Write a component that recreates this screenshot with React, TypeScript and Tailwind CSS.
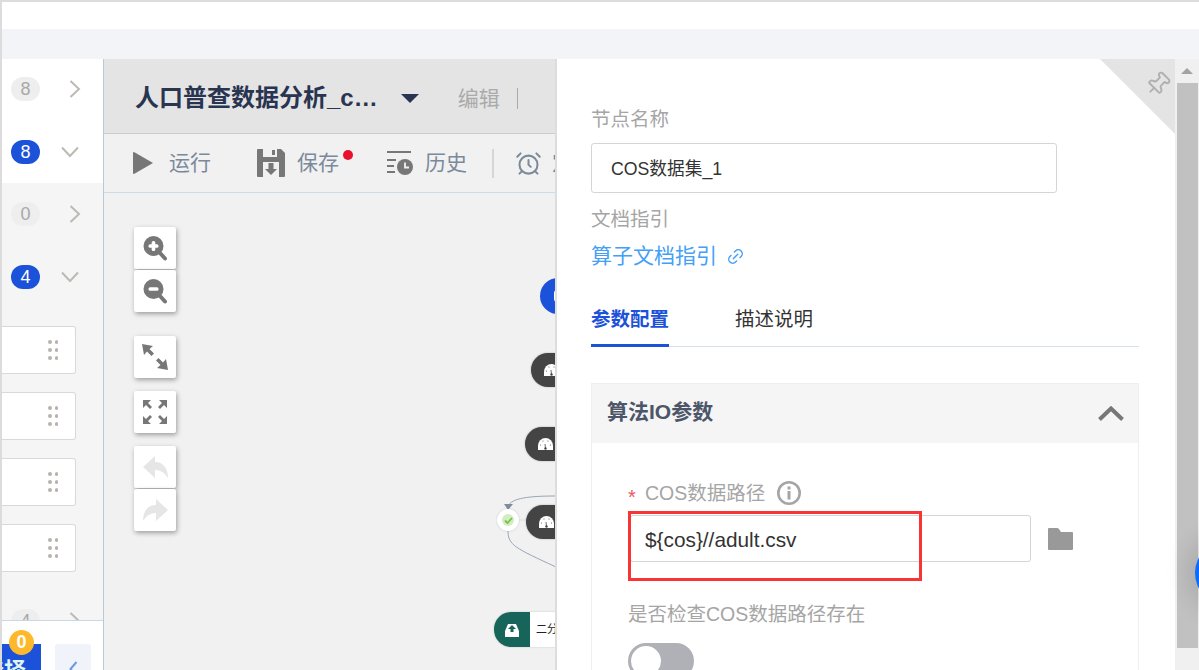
import React from 'react'
import { AlarmClock, Link2, Pin } from 'lucide-react'

const FONT = "font-['Liberation_Sans','Noto_Sans_CJK_SC',sans-serif]"

function ChevronRight() {
    return (
        <svg width="12" height="18" viewBox="0 0 12 18" fill="none" stroke="#bdbab6" strokeWidth="2">
            <polyline points="1.5,1 10,9 1.5,17" />
        </svg>
    )
}

function ChevronDown() {
    return (
        <svg width="18" height="12" viewBox="0 0 18 12" fill="none" stroke="#bdbab6" strokeWidth="2">
            <polyline points="1,1.5 9,10 17,1.5" />
        </svg>
    )
}

function SideRow({ count, open, className }: { count: number; open?: boolean; className: string }) {
    return (
        <div className={`flex items-center shrink-0 ${className}`}>
            <span className={`ml-[9px] w-[29px] h-[24px] rounded-full flex items-center justify-center text-[18px] ${open ? 'bg-[#1c52d9] text-white' : 'bg-[#eeeeee] text-[#a8a8a8]'}`}>
                {count}
            </span>
            {open ? <div className="ml-[21px]"><ChevronDown /></div> : <div className="ml-[29px]"><ChevronRight /></div>}
        </div>
    )
}

function SideCard() {
    return (
        <div className="w-[74px] h-[48px] shrink-0 bg-white border border-l-0 border-[#d9d9d9] rounded-r-[3px] flex items-center justify-end pr-[17px]">
            <div className="grid grid-cols-2 gap-x-[3px] gap-y-[4.5px]">
                {[0, 1, 2, 3, 4, 5].map(i => (
                    <span key={i} className="w-[3.5px] h-[3.5px] rounded-full bg-[#b8b3ad]" />
                ))}
            </div>
        </div>
    )
}

function Sidebar() {
    return (
        <aside className="w-[102px] shrink-0 flex flex-col border-r border-[#bcc8d4] bg-[#f5f5f6]">
            <div className="flex-1 overflow-hidden flex flex-col">
                <div className="bg-white shrink-0">
                    <SideRow count={8} className="h-[60px]" />
                    <SideRow count={8} open className="h-[64px] pt-[2px]" />
                </div>
                <SideRow count={0} className="h-[62px]" />
                <SideRow count={4} open className="h-[64px]" />
                <div className="mt-[17px] flex flex-col gap-[18px]">
                    <SideCard />
                    <SideCard />
                    <SideCard />
                    <SideCard />
                </div>
                <SideRow count={4} className="h-[62px] mt-[18px]" />
            </div>
            <div className="h-[50px] shrink-0 bg-white border-t border-[#c9d8e8] pt-[23px] flex relative">
                <div className="w-[39px] h-[40px] bg-[#1c52d9] overflow-hidden flex justify-end pt-[15px] pr-[15px]">
                    <span className="text-[#dff5ee] text-[22px] leading-[24px] font-bold whitespace-nowrap">选择</span>
                </div>
                <span className="absolute left-[7px] top-[9px] w-[25px] h-[25px] rounded-full bg-[#fdb92b] text-white font-bold text-[18px] flex items-center justify-center">0</span>
                <div className="ml-[14px] w-[36px] h-[40px] bg-[#f0f4fa] rounded-[3px] flex justify-center pt-[17px]">
                    <svg width="9" height="16" viewBox="0 0 9 16" fill="none" stroke="#6a9ae0" strokeWidth="2">
                        <polyline points="7.5,1 1.5,8 7.5,15" />
                    </svg>
                </div>
            </div>
        </aside>
    )
}

function ZoomIcon({ plus }: { plus?: boolean }) {
    return (
        <svg width="24" height="26" viewBox="0 0 24 26">
            <circle cx="10.5" cy="11" r="10" fill="#777777" />
            <line x1="17" y1="18" x2="22" y2="23.5" stroke="#777777" strokeWidth="4" strokeLinecap="round" />
            <rect x="5.5" y="9.2" width="10" height="3.6" rx="1.6" fill="#ffffff" />
            {plus && <rect x="8.7" y="6" width="3.6" height="10" rx="1.6" fill="#ffffff" />}
        </svg>
    )
}

function ExpandIcon() {
    return (
        <svg width="26" height="26" viewBox="0 0 26 26" fill="#777777">
            <polygon points="0,0 11,2 7.5,5 12,9.5 9.5,12 5,7.5 2,11" />
            <polygon points="26,26 15,24 18.5,21 14,16.5 16.5,14 21,18.5 24,15" />
        </svg>
    )
}

function FitIcon() {
    return (
        <svg width="24" height="24" viewBox="0 0 24 24" fill="#777777">
            <polygon points="0,0 8,0 5,3 9,7 7,9 3,5 0,8" />
            <polygon points="24,0 24,8 21,5 17,9 15,7 19,3 16,0" />
            <polygon points="0,24 0,16 3,19 7,15 9,17 5,21 8,24" />
            <polygon points="24,24 16,24 19,21 15,17 17,15 21,19 24,16" />
        </svg>
    )
}

function ReplyIcon({ flip }: { flip?: boolean }) {
    return (
        <svg className={flip ? '-scale-x-100' : ''} width="25" height="23" viewBox="0 0 25 23">
            <path d="M0 11 L12 0 L12 6 C20 6 25 12 25 22 C21 16 17 14 12 14 L12 22 Z" fill="#e6e6e6" />
        </svg>
    )
}

function ToolButton({ children, className }: { children: React.ReactNode; className?: string }) {
    return (
        <div className={`w-[42px] h-[42px] bg-white rounded-[2px] shadow-[1px_2px_5px_rgba(0,0,0,0.35)] flex items-center justify-center ${className ?? ''}`}>
            {children}
        </div>
    )
}

function Gauge() {
    return (
        <svg className="shrink-0" width="15" height="12" viewBox="0 0 15 12">
            <path d="M0 12 L0 8 A7.5 8 0 0 1 15 8 L15 12 Z" fill="#ffffff" />
            <circle cx="7.5" cy="10.5" r="1.2" fill="#444444" />
            <line x1="7.5" y1="10.5" x2="7" y2="6" stroke="#444444" strokeWidth="0.8" />
            <circle cx="2.5" cy="7" r="0.5" fill="#444444" />
            <circle cx="5" cy="3" r="0.5" fill="#444444" />
            <circle cx="10" cy="3" r="0.5" fill="#444444" />
            <circle cx="12.5" cy="7" r="0.5" fill="#444444" />
        </svg>
    )
}

function DarkNode({ x, y }: { x: number; y: number }) {
    return (
        <div className="absolute w-[80px] h-[34px] rounded-l-[17px] bg-[#444444] flex items-center pl-[13px] shadow-[0_0_2px_rgba(0,0,0,0.3)]" style={{ left: x, top: y }}>
            <Gauge />
        </div>
    )
}

function Canvas() {
    return (
        <div className="relative flex-1 overflow-hidden bg-[#f1f1f1] pl-[30px] pt-[34px]">
            <svg className="absolute left-0 top-0" width="451" height="477" fill="none" stroke="#9aa5b8" strokeWidth="1">
                <path d="M452 303 C425 303 408 305 404 313" />
                <polygon points="400,311 409,311 404,317" fill="#7f8ba0" stroke="none" />
                <path d="M404 338 C404 352 411 355 452 374" />
                <line x1="414" y1="327" x2="424" y2="327" stroke="#dddddd" />
            </svg>

            <ToolButton><ZoomIcon plus /></ToolButton>
            <ToolButton className="mt-px"><ZoomIcon /></ToolButton>
            <ToolButton className="mt-[24px]"><ExpandIcon /></ToolButton>
            <ToolButton className="mt-[13px]"><FitIcon /></ToolButton>
            <ToolButton className="mt-[13px]"><ReplyIcon /></ToolButton>
            <ToolButton className="mt-px"><ReplyIcon flip /></ToolButton>

            <div className="absolute left-[436px] top-[85px] w-[36px] h-[36px] rounded-full bg-[#1c52d9] flex items-center pl-[14px]">
                <span className="w-[6px] h-[12px] bg-white rounded-l-[3px]" />
            </div>
            <DarkNode x={427} y={160} />
            <DarkNode x={421} y={234} />
            <DarkNode x={422} y={312} />
            <div className="absolute left-[393px] top-[316px] w-[22px] h-[22px] rounded-full bg-white shadow-[0_0_2px_rgba(0,0,0,0.2)] flex items-center justify-center">
                <div className="w-[12px] h-[12px] rounded-full bg-[#d3ecc4] flex items-center justify-center">
                    <svg width="9" height="7" viewBox="0 0 9 7" fill="none" stroke="#76c442" strokeWidth="1.8">
                        <polyline points="1,3.5 3.5,6 8,1" />
                    </svg>
                </div>
            </div>
            <div className="absolute left-[390px] top-[419px] h-[35px] w-[90px] flex rounded-l-[17px] overflow-hidden bg-white shadow-[0_0_2px_rgba(0,0,0,0.2)]">
                <div className="w-[36px] bg-[#17655a] flex items-center justify-center">
                    <svg width="14" height="14" viewBox="0 0 14 14">
                        <path d="M3 1 L11 1 L14 8 L14 14 L0 14 L0 8 Z" fill="#ffffff" />
                        <path d="M7 2 L11 6 L8.5 6 L8.5 9 L5.5 9 L5.5 6 L3 6 Z" fill="#17655a" />
                    </svg>
                </div>
                <span className="pl-[6px] text-[11px] leading-[35px] text-[#222222]">二分类</span>
            </div>
        </div>
    )
}

function Workspace() {
    return (
        <main className="w-[451px] shrink-0 flex flex-col overflow-hidden">
            <div className="h-[75px] shrink-0 bg-[#e4e4e4] border-b border-[#cccccc] flex items-center pl-[31px] pt-[5px]">
                <h1 className="-mt-[1px] text-[24px] font-bold text-[#283450] whitespace-nowrap">人口普查数据分析_c…</h1>
                <svg className="ml-[23px] shrink-0" width="18" height="9" viewBox="0 0 18 9"><polygon points="0,0 18,0 9,9" fill="#283450" /></svg>
                <span className="ml-[39px] text-[21px] text-[#aaaaaa] whitespace-nowrap">编辑</span>
                <span className="ml-[17px] w-px h-[21px] bg-[#aaaaaa] shrink-0" />
            </div>
            <div className="h-[59px] shrink-0 bg-[#f1f1f1] border-b border-[#cddbe8] flex items-center pl-[29px] text-[21px] text-[#7b8a9b] whitespace-nowrap">
                <svg className="shrink-0" width="20" height="22" viewBox="0 0 20 22"><path d="M1 0 L20 11 L1 22 Q0 22 0 21 L0 1 Q0 0 1 0 Z" fill="#777777" /></svg>
                <span className="ml-[16px]">运行</span>
                <svg className="ml-[46px] shrink-0" width="28" height="28" viewBox="0 0 28 28">
                    <path d="M1 0 H6 V8 H20 V0 H24 L28 4 V27 Q28 28 27 28 H1 Q0 28 0 27 V1 Q0 0 1 0 Z" fill="#777777" />
                    <rect x="15" y="1" width="3" height="5" fill="#777777" />
                    <path d="M6 13 H22 V28 H6 Z" fill="#f1f1f1" />
                    <path d="M11.5 14 H16.5 V20 H20 L14 26 L8 20 H11.5 Z" fill="#777777" />
                </svg>
                <span className="ml-[12px] relative">
                    保存
                    <span className="absolute left-[46px] top-[3px] w-[10px] h-[10px] rounded-full bg-[#e8112d]" />
                </span>
                <svg className="ml-[48px] shrink-0" width="26" height="25" viewBox="0 0 26 25">
                    <rect x="0" y="0" width="24" height="2" fill="#777777" />
                    <rect x="0" y="8" width="9" height="2" fill="#777777" />
                    <rect x="0" y="14" width="7" height="2" fill="#777777" />
                    <rect x="0" y="20" width="8" height="2" fill="#777777" />
                    <circle cx="18" cy="16" r="8" fill="#777777" />
                    <polyline points="18,11.5 18,16.5 22,16.5" fill="none" stroke="#f1f1f1" strokeWidth="1.8" />
                </svg>
                <span className="ml-[12px]">历史</span>
                <span className="ml-[25px] w-[2px] h-[29px] bg-[#d5d5d5] shrink-0" />
                <AlarmClock className="ml-[21px] shrink-0" size={27} color="#7b8a9b" strokeWidth={1.8} />
                <span className="ml-[10px]">定时</span>
            </div>
            <Canvas />
        </main>
    )
}

function FieldLabel({ children }: { children: React.ReactNode }) {
    return <div className="h-[30px] leading-[32px] text-[19.5px] text-[#a5a5a5] whitespace-nowrap">{children}</div>
}

function DetailPanel() {
    return (
        <section className="relative w-[620px] shrink-0 border-l-2 border-[#dddddd] bg-white pl-[34px] pt-[44px] overflow-hidden">
            <div className="absolute right-0 top-0 w-0 h-0 border-t-[75px] border-l-[75px] border-t-[#e4e4e4] border-l-transparent" />
            <Pin className="absolute right-[4px] top-[12px] rotate-45" size={26} color="#b0b0b0" strokeWidth={1.8} />

            <FieldLabel>节点名称</FieldLabel>
            <div className="mt-[10px] w-[466px] h-[50px] border border-[#d5d5d5] rounded-[3px] pl-[19px] leading-[50px] text-[17.7px] text-[#333333]">COS数据集_1</div>
            <div className="mt-[10px]"><FieldLabel>文档指引</FieldLabel></div>
            <div className="mt-[8px] h-[30px] flex items-center text-[21px] text-[#42a0f8]">
                算子文档指引
                <Link2 className="ml-[9px] -rotate-45" size={19} color="#42a0f8" strokeWidth={1.8} />
            </div>

            <div className="mt-[25px] w-[548px] h-[51px] border-b border-[#d8e0e8] flex text-[19.5px] leading-[46px]">
                <div className="w-[78px] h-[51px] border-b-[3px] border-[#1c52d9] font-bold text-[#1c52d9] whitespace-nowrap">参数配置</div>
                <div className="ml-[66px] text-[#333333] whitespace-nowrap">描述说明</div>
            </div>

            <div className="mt-[36px] w-[548px] border border-[#eeeeee] border-b-0 h-[300px]">
                <div className="h-[59px] bg-[#f5f5f5] flex items-center justify-between pl-[15px] pr-[14px]">
                    <span className="text-[21px] font-bold text-[#4d5669] whitespace-nowrap pb-[4px]">算法IO参数</span>
                    <svg width="26" height="15" viewBox="0 0 26 15" fill="none" stroke="#777777" strokeWidth="4">
                        <polyline points="1.5,13.5 13,2.5 24.5,13.5" />
                    </svg>
                </div>
                <div className="pl-[36px] pt-[35px]">
                    <div className="h-[30px] flex items-center">
                        <span className="w-[17px] text-[20px] leading-[30px] pt-[8px] text-[#e8585d]">*</span>
                        <span className="text-[19.5px] leading-[32px] text-[#a5a5a5] whitespace-nowrap">COS数据路径</span>
                        <svg className="ml-[12px]" width="24" height="24" viewBox="0 0 24 24">
                            <circle cx="12" cy="12" r="10.7" fill="none" stroke="#a5a5a5" strokeWidth="2.6" />
                            <rect x="10.5" y="5.5" width="3" height="3" fill="#a5a5a5" />
                            <rect x="10.5" y="10" width="3" height="8.5" fill="#a5a5a5" />
                        </svg>
                    </div>
                    <div className="relative mt-[7px] flex items-center">
                        <div className="ml-[2px] w-[401px] h-[47px] border border-[#d5d5d5] rounded-[3px] pl-[14px] leading-[47px] text-[20.8px] text-[#333333] whitespace-nowrap">{'${cos}//adult.csv'}</div>
                        <svg className="ml-[17px]" width="25" height="22" viewBox="0 0 25 22">
                            <path d="M1 0 H9 Q10 0 11 1 L13 4 H24 Q25 4 25 5 V21 Q25 22 24 22 H1 Q0 22 0 21 V1 Q0 0 1 0 Z" fill="#999999" />
                        </svg>
                        <div className="absolute left-0 top-[-4px] w-[294px] h-[70px] border-[3px] border-[#f83434]" />
                    </div>
                    <div className="mt-[36px]"><FieldLabel>是否检查COS数据路径存在</FieldLabel></div>
                    <div className="mt-[15px] w-[66px] h-[36px] rounded-full bg-[#b0b1b6] flex items-center pl-[3px]">
                        <span className="w-[30px] h-[30px] rounded-full bg-white" />
                    </div>
                </div>
            </div>
        </section>
    )
}

function Scrollbar() {
    return (
        <div className="relative w-[24px] shrink-0 bg-[#f0f0f0] flex flex-col">
            <div className="h-[24px] shrink-0 flex items-center justify-center">
                <svg width="12" height="6" viewBox="0 0 12 6"><polygon points="6,0 12,6 0,6" fill="#a3a3a3" /></svg>
            </div>
            <div className="ml-[2px] mr-[1px] h-[565px] bg-[#c1c1c1]" />
            <div className="absolute left-[20px] top-[482px] w-[64px] h-[64px] rounded-full bg-[#0a6cff] shadow-[0_0_24px_8px_rgba(0,0,0,0.12)]" />
        </div>
    )
}

export default function App() {
    return (
        <div className={`w-[1199px] h-[670px] overflow-hidden flex flex-col border-t-2 border-l-2 border-[#dcdcdc] bg-white ${FONT}`}>
            <div className="h-[27px] shrink-0 bg-white" />
            <div className="h-[30px] shrink-0 bg-[#f2f4f8]" />
            <div className="flex-1 flex min-h-0">
                <Sidebar />
                <Workspace />
                <DetailPanel />
                <Scrollbar />
            </div>
        </div>
    )
}
